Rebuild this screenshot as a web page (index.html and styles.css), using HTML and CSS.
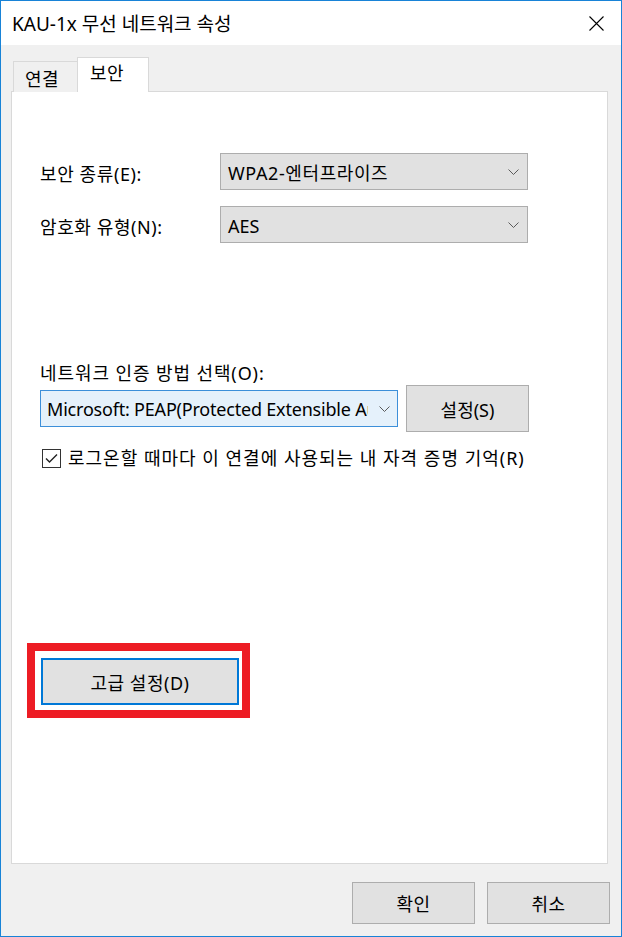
FILE: index.html
```html
<!DOCTYPE html>
<html lang="ko">
<head>
  <meta charset="UTF-8">
  <title>KAU-1x 무선 네트워크 속성</title>
  <link rel="stylesheet" href="styles.css">
</head>
<body>

  <div class="window">
    <div class="title-bar">
      <span class="title">KAU-1x 무선 네트워크 속성</span>
      <svg class="close" width="15" height="15" viewBox="0 0 15 15">
        <path d="M0.5 0.5 L14.5 14.5 M14.5 0.5 L0.5 14.5" stroke="#000" stroke-width="1.1" fill="none"/>
      </svg>
    </div>

    <div class="dialog">
      <div class="tabs">
        <div class="tab">연결</div>
        <div class="tab active">보안</div>
      </div>

      <div class="panel">
        <div class="form-grid">
          <label>보안 종류(E):</label>
          <div class="combo">
            <span class="combo-text ko">WPA2-엔터프라이즈</span>
            <svg class="chevron" width="11" height="6" viewBox="0 0 11 6"><path d="M0.5 0.5 L5.5 5.5 L10.5 0.5" stroke="#5a5a5a" fill="none"/></svg>
          </div>
          <label>암호화 유형(N):</label>
          <div class="combo">
            <span class="combo-text">AES</span>
            <svg class="chevron" width="11" height="6" viewBox="0 0 11 6"><path d="M0.5 0.5 L5.5 5.5 L10.5 0.5" stroke="#5a5a5a" fill="none"/></svg>
          </div>
        </div>

        <div class="auth-label">네트워크 인증 방법 선택(O):</div>
        <div class="auth-row">
          <div class="combo focused">
            <span class="combo-text clipped">Microsoft: PEAP(Protected Extensible Au</span>
            <svg class="chevron" width="11" height="6" viewBox="0 0 11 6"><path d="M0.5 0.5 L5.5 5.5 L10.5 0.5" stroke="#5a5a5a" fill="none"/></svg>
          </div>
          <button class="btn settings-btn">설정(S)</button>
        </div>

        <div class="check-row">
          <span class="checkbox">
            <svg width="13" height="11" viewBox="0 0 13 11"><path d="M1 5.5 L4.5 9 L12 1.5" stroke="#222" stroke-width="1.4" fill="none"/></svg>
          </span>
          <span class="check-label">로그온할 때마다 이 연결에 사용되는 내 자격 증명 기억(R)</span>
        </div>

        <!-- highlighted in the screenshot -->
        <div class="highlight">
          <button class="btn advanced-btn">고급 설정(D)</button>
        </div>
      </div>
    </div>

    <div class="footer">
      <button class="btn footer-btn">확인</button>
      <button class="btn footer-btn">취소</button>
    </div>
  </div>

</body>
</html>
```

FILE: styles.css
```css
* {
  box-sizing: border-box;
}

body {
  margin: 0;
  font-family: 'Noto Sans', 'Noto Sans CJK KR', sans-serif;
  font-size: 18px;
  color: #000;
  background: #fff;
}

.window {
  width: 622px;
  height: 937px;
  border: 1px solid #1883d7;
  background-color: #f0f0f0;
  display: flex;
  flex-direction: column;
}

.title-bar {
  height: 44px;
  background-color: #fff;
  display: flex;
  align-items: center;
  justify-content: space-between;
  padding: 0 17px 0 11px;
}

.title {
  font-size: 19px;
  line-height: 22px;
  margin-top: 1px;
}

.close {
  display: block;
}

.dialog {
  padding: 13px 13px 0 10px;
}

.tabs {
  display: flex;
  align-items: flex-end;
  height: 34px;
  margin-bottom: -1px;
  position: relative;
  z-index: 1;
  padding-left: 2px;
}

.tab {
  height: 31px;
  width: 65px;
  border: 1px solid #d9d9d9;
  border-bottom: none;
  background-color: #f0f0f0;
  padding: 5px 0 0 11px;
  line-height: 24px;
  letter-spacing: 0.5px;
}

.tab.active {
  height: 35px;
  width: 72px;
  margin-left: -1px;
  background-color: #fff;
  padding: 3px 0 0 12px;
}

.panel {
  height: 773px;
  background-color: #fff;
  border: 1px solid #d9d9d9;
  padding: 61px 0 0 28px;
}

.form-grid {
  display: grid;
  grid-template-columns: 180px 308px;
  row-gap: 16px;
  align-items: center;
}

.form-grid label {
  line-height: 24px;
  padding-top: 4px;
  letter-spacing: 0.6px;
}

.combo {
  height: 37px;
  background-color: #e1e1e1;
  border: 1px solid #adadad;
  display: flex;
  align-items: center;
  justify-content: space-between;
  padding: 0 8px 0 7px;
}

.combo-text {
  white-space: nowrap;
  line-height: 24px;
  padding-top: 2px;
}

.combo-text.ko {
  letter-spacing: 0.6px;
}

.combo.focused {
  width: 358px;
  margin-top: 5px;
  background-color: #e5f1fb;
  border-color: #3c8fd9;
  padding: 0 7px 0 6px;
}

.combo-text.clipped {
  width: 321px;
  overflow: hidden;
  padding-top: 0;
  letter-spacing: -0.2px;
}

.chevron {
  display: block;
  flex-shrink: 0;
}

.auth-label {
  margin-top: 118px;
  line-height: 24px;
  letter-spacing: 0.9px;
}

.auth-row {
  display: flex;
  align-items: flex-start;
  gap: 8px;
}

.btn {
  font-family: inherit;
  font-size: 18px;
  color: #000;
  background-color: #e1e1e1;
  border: 1px solid #adadad;
  padding: 0;
  cursor: pointer;
}

.settings-btn {
  width: 123px;
  height: 47px;
}

.check-row {
  display: flex;
  align-items: center;
  gap: 7px;
  margin-top: 16px;
  margin-left: 2px;
  line-height: 20px;
}

.check-label {
  letter-spacing: 1px;
}

.checkbox {
  width: 19px;
  height: 19px;
  border: 1px solid #333;
  display: flex;
  align-items: center;
  justify-content: center;
  background-color: #fff;
}

.checkbox svg {
  display: block;
}

.highlight {
  display: inline-block;
  margin: 175px 0 0 -13px;
  border: 8px solid #ed1c24;
  padding: 7px 3px 5px 6px;
}

.advanced-btn {
  display: block;
  width: 198px;
  height: 47px;
  border: 2px solid #0078d7;
  letter-spacing: 0.5px;
}

.footer {
  display: flex;
  justify-content: flex-end;
  gap: 12px;
  padding: 18px 11px 0 0;
}

.footer-btn {
  width: 123px;
  height: 42px;
  letter-spacing: 0.5px;
}
```
